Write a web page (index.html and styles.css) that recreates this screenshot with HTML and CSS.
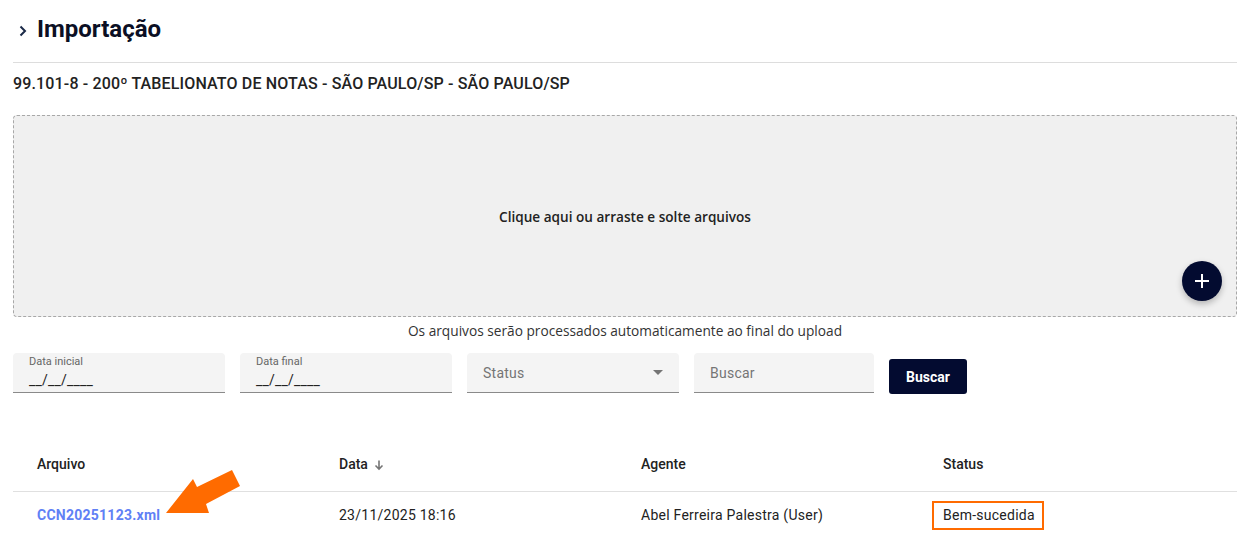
FILE: index.html
```html
<!DOCTYPE html>
<html lang="pt-BR">
<head>
<meta charset="utf-8">
<title>Importação</title>
<link rel="stylesheet" href="styles.css">
</head>
<body>
<div class="page">
  <header class="title-row">
    <svg class="chev" width="10" height="12" viewBox="0 0 10 12"><path d="M2.5 1.5 L7 6 L2.5 10.5" fill="none" stroke="#1b2a48" stroke-width="2"/></svg>
    <h1 class="title">Importação</h1>
  </header>
  <div class="subtitle">99.101-8 - 200º TABELIONATO DE NOTAS - SÃO PAULO/SP - SÃO PAULO/SP</div>

  <div class="dropzone">
    <span class="drop-text">Clique aqui ou arraste e solte arquivos</span>
    <button class="fab" aria-label="Adicionar">
      <svg width="16" height="16" viewBox="0 0 16 16"><path d="M8 1 V15 M1 8 H15" stroke="#fff" stroke-width="2"/></svg>
    </button>
  </div>
  <div class="caption">Os arquivos serão processados automaticamente ao final do upload</div>

  <div class="filters">
    <div class="field w212">
      <span class="f-label">Data inicial</span>
      <span class="f-value">__/__/____</span>
    </div>
    <div class="field w212">
      <span class="f-label">Data final</span>
      <span class="f-value">__/__/____</span>
    </div>
    <div class="field w212 single">
      <span class="f-ph">Status</span>
      <span class="caret"></span>
    </div>
    <div class="field w180 single">
      <span class="f-ph">Buscar</span>
    </div>
    <button class="btn">Buscar</button>
  </div>

  <div class="table">
    <div class="thead">
      <div class="cell">Arquivo</div>
      <div class="cell">Data <svg class="sort" width="12" height="12" viewBox="0 0 12 12"><path d="M6 1.5 V10 M2.5 6.5 L6 10 L9.5 6.5" fill="none" stroke="#757575" stroke-width="1.6"/></svg></div>
      <div class="cell">Agente</div>
      <div class="cell">Status</div>
    </div>
    <div class="trow">
      <div class="cell"><a class="file-link" href="#">CCN20251123.xml</a></div>
      <div class="cell">23/11/2025 18:16</div>
      <div class="cell">Abel Ferreira Palestra (User)</div>
      <div class="cell"><span class="status-box">Bem-sucedida</span></div>
    </div>
    <svg class="arrow" width="100" height="60" viewBox="0 0 100 60"><polygon points="16,52 43,18 47,26 82,9 90,25 56,43 59,52" fill="#ff6b00"/></svg>
  </div>
</div>
</body>
</html>
```

FILE: styles.css
```css
* { box-sizing: border-box; }
html, body { margin: 0; padding: 0; background: #fff; }
body {
  font-family: Roboto, "Liberation Sans", Arial, sans-serif;
  color: #222;
}
.page {
  padding: 0 16px 0 13px;
}
.title-row {
  display: flex;
  align-items: center;
  height: 63px;
  padding: 15px 0 19px 5px;
  border-bottom: 1px solid #ddd;
}
.chev { margin-right: 9px; margin-top: 4px; }
.title {
  margin: 0;
  font-size: 24px;
  line-height: 28px;
  font-weight: 700;
  color: #0b0f24;
}
.subtitle {
  margin-top: 11px;
  font-size: 16px;
  line-height: 20px;
  font-weight: 500;
  letter-spacing: 0.15px;
  color: #222;
}
.dropzone {
  position: relative;
  margin-top: 21px;
  height: 202px;
  background: #f0f0f0;
  border: 1px dashed #a8a8a8;
  border-radius: 4px;
  display: flex;
  align-items: center;
  justify-content: center;
}
.drop-text {
  font-family: "Open Sans", "Noto Sans", sans-serif;
  font-size: 13.6px;
  font-weight: 600;
  color: #222;
}
.fab {
  position: absolute;
  right: 14px;
  bottom: 15px;
  width: 40px;
  height: 40px;
  border-radius: 50%;
  border: none;
  background: #030b30;
  box-shadow: 0 3px 6px rgba(0,0,0,0.25);
  display: flex;
  align-items: center;
  justify-content: center;
  padding: 0;
}
.caption {
  margin-top: 5px;
  text-align: center;
  font-family: "Open Sans", "Noto Sans", sans-serif;
  font-size: 13.7px;
  line-height: 18px;
  color: #333;
}
.filters {
  margin-top: 13px;
  display: flex;
  align-items: flex-start;
  gap: 15px;
}
.field {
  height: 40px;
  background: #f4f4f4;
  border-radius: 4px 4px 0 0;
  border-bottom: 1px solid #8a8a8a;
  padding: 0 16px;
  display: flex;
  flex-direction: column;
  justify-content: flex-start;
  position: relative;
}
.w212 { width: 212px; }
.w180 { width: 180px; }
.f-label {
  margin-top: 2px;
  font-size: 11px;
  line-height: 14px;
  color: #666;
}
.f-value {
  margin-top: 2px;
  font-size: 14px;
  line-height: 18px;
  color: #222;
  letter-spacing: 0.2px;
}
.single {
  flex-direction: row;
  align-items: center;
  justify-content: space-between;
}
.f-ph {
  font-size: 14px;
  letter-spacing: 0.25px;
  color: #757575;
  margin-top: 1px;
}
.caret {
  width: 0; height: 0;
  border-left: 5px solid transparent;
  border-right: 5px solid transparent;
  border-top: 5px solid #757575;
}
.btn {
  margin-top: 6px;
  width: 78px;
  height: 35px;
  border: none;
  border-radius: 3px;
  background: #030b30;
  color: #fff;
  font-family: Roboto, "Liberation Sans", sans-serif;
  font-size: 14px;
  font-weight: 700;
  padding: 0;
}
.table {
  position: relative;
  margin-top: 42px;
}
.thead, .trow {
  display: grid;
  grid-template-columns: 302px 302px 302px 1fr;
}
.thead {
  height: 56px;
  border-bottom: 1px solid #e0e0e0;
  align-items: center;
}
.thead .cell {
  font-size: 14px;
  font-weight: 500;
  color: #222;
}
.trow {
  height: 46px;
  align-items: center;
}
.trow .cell {
  font-size: 14px;
  letter-spacing: 0.25px;
  color: #222;
}
.cell {
  padding-left: 24px;
  display: flex;
  align-items: center;
}
.sort { margin-left: 5px; margin-top: 2px; }
.file-link {
  color: #6080f5;
  font-weight: 700;
  text-decoration: none;
}
.status-box {
  margin-left: -11px;
  padding: 4px 7px 4px 9px;
  border: 2px solid #ff6b00;
  line-height: 17px;
}
.arrow {
  position: absolute;
  left: 137px;
  top: 25px;
}
```
